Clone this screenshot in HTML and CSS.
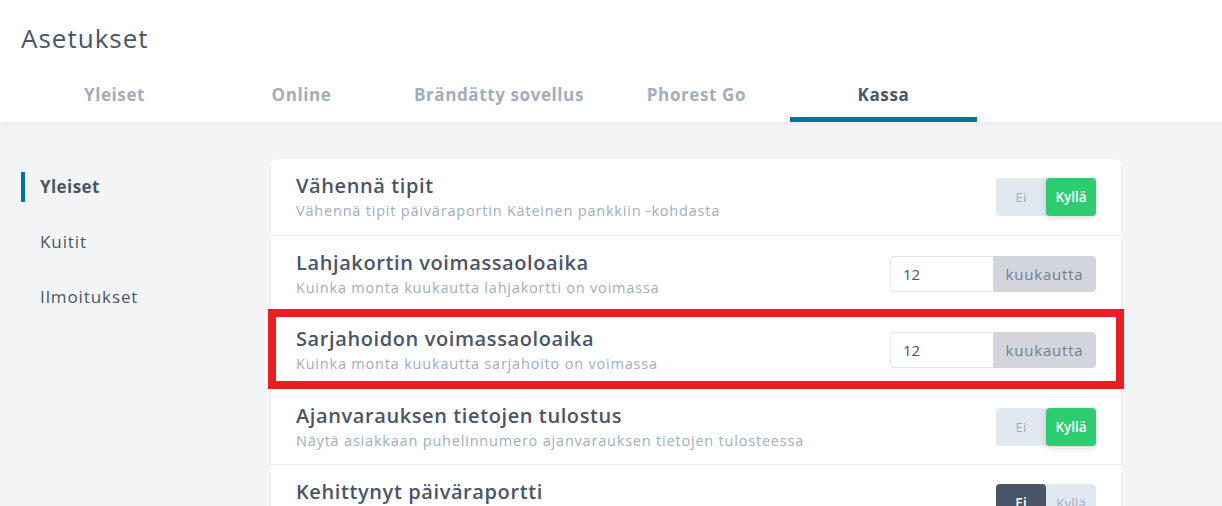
FILE: index.html
```html
<!DOCTYPE html>
<html lang="fi">
<head>
<meta charset="utf-8">
<title>Asetukset</title>
<link rel="stylesheet" href="styles.css">
</head>
<body>
<header class="header">
  <h1 class="page-title">Asetukset</h1>
  <nav class="tabs">
    <a class="tab">Yleiset</a>
    <a class="tab">Online</a>
    <a class="tab">Brändätty sovellus</a>
    <a class="tab">Phorest Go</a>
    <a class="tab tab-active">Kassa</a>
  </nav>
</header>
<main class="main">
  <aside class="sidebar">
    <a class="side-item side-active">Yleiset</a>
    <a class="side-item">Kuitit</a>
    <a class="side-item">Ilmoitukset</a>
  </aside>
  <section class="card">
    <div class="row">
      <div class="row-text">
        <div class="row-title">Vähennä tipit</div>
        <div class="row-sub">Vähennä tipit päiväraportin Käteinen pankkiin -kohdasta</div>
      </div>
      <div class="toggle">
        <span class="opt">Ei</span>
        <span class="opt opt-yes">Kyllä</span>
      </div>
    </div>
    <div class="row">
      <div class="row-text">
        <div class="row-title">Lahjakortin voimassaoloaika</div>
        <div class="row-sub">Kuinka monta kuukautta lahjakortti on voimassa</div>
      </div>
      <div class="input-group">
        <span class="input">12</span>
        <span class="addon">kuukautta</span>
      </div>
    </div>
    <div class="row row-marked">
      <div class="row-text">
        <div class="row-title">Sarjahoidon voimassaoloaika</div>
        <div class="row-sub">Kuinka monta kuukautta sarjahoito on voimassa</div>
      </div>
      <div class="input-group">
        <span class="input">12</span>
        <span class="addon">kuukautta</span>
      </div>
    </div>
    <div class="row">
      <div class="row-text">
        <div class="row-title">Ajanvarauksen tietojen tulostus</div>
        <div class="row-sub">Näytä asiakkaan puhelinnumero ajanvarauksen tietojen tulosteessa</div>
      </div>
      <div class="toggle">
        <span class="opt">Ei</span>
        <span class="opt opt-yes">Kyllä</span>
      </div>
    </div>
    <div class="row">
      <div class="row-text">
        <div class="row-title">Kehittynyt päiväraportti</div>
      </div>
      <div class="toggle">
        <span class="opt opt-no">Ei</span>
        <span class="opt">Kyllä</span>
      </div>
    </div>
  </section>
</main>
</body>
</html>
```
FILE: styles.css
```css
* { box-sizing: border-box; }
html, body { margin: 0; padding: 0; }
body {
  font-family: "Open Sans", "DejaVu Sans", sans-serif;
  background: #f3f4f6;
  color: #4a5568;
  height: 506px;
  overflow: hidden;
}
.header {
  background: #fff;
  padding: 0 21px;
  box-shadow: 0 1px 6px rgba(0,0,0,0.06);
  position: relative;
  z-index: 1;
}
.page-title {
  margin: 0;
  padding-top: 23px;
  margin-bottom: 15px;
  font-size: 26px;
  line-height: 30px;
  font-weight: 500;
  letter-spacing: 1px;
  color: #4a5568;
}
.tabs { display: flex; }
.tab {
  min-width: 187px;
  padding: 16px 19px 11px;
  border-bottom: 5px solid transparent;
  text-align: center;
  font-size: 17px;
  line-height: 22px;
  font-weight: 700;
  letter-spacing: 0.6px;
  color: #a0aec0;
  white-space: nowrap;
}
.tab-active { color: #4a5568; border-bottom-color: #00739f; }
.main {
  display: flex;
  padding: 37px 101px 0 21px;
}
.sidebar {
  width: 250px;
  flex: none;
  display: flex;
  flex-direction: column;
  padding-top: 13px;
  gap: 25px;
}
.side-item {
  height: 30px;
  line-height: 30px;
  padding-left: 15px;
  border-left: 4px solid transparent;
  font-size: 17px;
  letter-spacing: 0.9px;
  color: #4a5568;
}
.side-active { border-left-color: #00739f; font-weight: 700; letter-spacing: 0.4px; }
.card {
  flex: 1;
  background: #fff;
  border-radius: 5px;
  box-shadow: 0 1px 3px rgba(0,0,0,0.06);
}
.row {
  position: relative;
  display: flex;
  align-items: center;
  justify-content: space-between;
  padding: 14px 25px 13.5px;
  border-bottom: 1px solid #edf0f3;
}
.row-text { min-height: 48px; }
.row-title {
  font-size: 20px;
  line-height: 26px;
  font-weight: 600;
  letter-spacing: 0.6px;
  color: #4a5568;
}
.row-sub {
  margin-top: 2px;
  font-size: 14.5px;
  line-height: 20px;
  letter-spacing: 0.8px;
  color: #a0aec0;
}
.row-marked::after {
  content: "";
  position: absolute;
  left: -3px;
  right: -3px;
  top: -3px;
  bottom: -1px;
  border: 8px solid #ed1c24;
  pointer-events: none;
}
.toggle {
  display: flex;
  width: 100px;
  height: 38px;
  border-radius: 4px;
  background: #e2e8f0;
}
.opt {
  flex: 1;
  display: flex;
  align-items: center;
  justify-content: center;
  font-size: 13.5px;
  color: #a0aec0;
  border-radius: 4px;
}
.opt-yes {
  background: #2ecc71;
  color: #fff;
  font-weight: 600;
  box-shadow: 0 2px 6px rgba(0,0,0,0.15);
}
.opt-no {
  background: #4a5568;
  color: #fff;
  font-weight: 600;
}
.input-group {
  display: flex;
  width: 206px;
  height: 36px;
}
.input {
  width: 103px;
  display: flex;
  align-items: center;
  padding-left: 12px;
  border: 1px solid #e2e8f0;
  border-right: none;
  border-radius: 4px 0 0 4px;
  font-size: 15px;
  color: #4a5568;
  background: #fff;
}
.addon {
  width: 103px;
  display: flex;
  align-items: center;
  justify-content: center;
  background: #d2d6dc;
  border-radius: 0 4px 4px 0;
  font-size: 15px;
  letter-spacing: 0.8px;
  color: #718096;
}
```
